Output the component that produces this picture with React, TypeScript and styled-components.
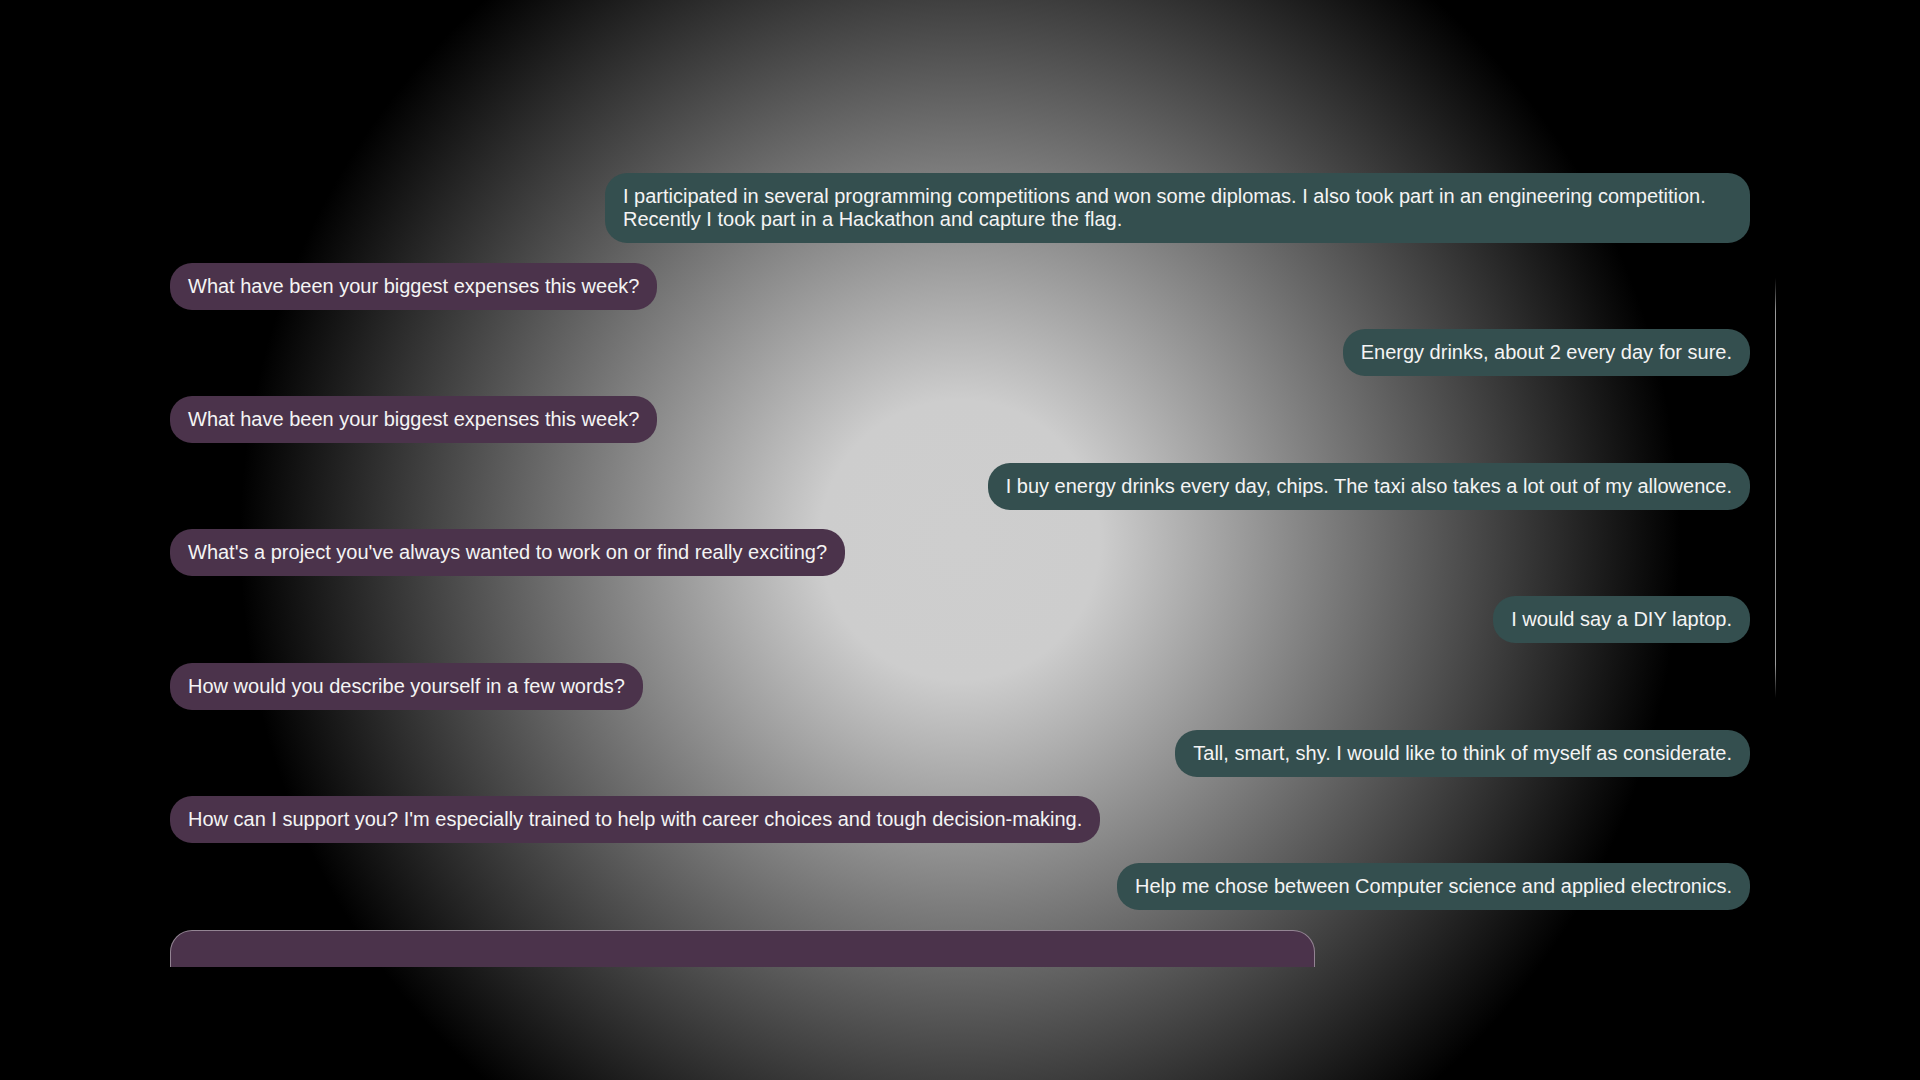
import styled, { createGlobalStyle } from "styled-components";

const GlobalStyle = createGlobalStyle`
    html, body {
        margin: 0;
        padding: 0;
        height: 100%;
        background: #000;
    }
    body {
        font-family: "Liberation Sans", Arial, sans-serif;
    }
    #root {
        height: 100%;
    }
`;

const Page = styled.div`
    width: 100vw;
    height: 100vh;
    overflow: hidden;
    background: radial-gradient(circle at 50% 50%, #cecece 0px, #cdcdcd 140px, #000 720px);
    display: flex;
    justify-content: center;
    align-items: flex-start;
`;

const ChatFrame = styled.div`
    display: flex;
    margin-top: 173px;
    margin-left: 26px;
    height: 794px;
`;

const MessageList = styled.div`
    width: 1580px;
    display: flex;
    flex-direction: column;
    gap: 19.7px;
    overflow: hidden;
`;

const Row = styled.div<{ $mine?: boolean }>`
    display: flex;
    justify-content: ${({ $mine }) => ($mine ? "flex-end" : "flex-start")};
`;

const Bubble = styled.div<{ $mine?: boolean }>`
    box-sizing: border-box;
    max-width: 1145px;
    padding: 12px 18px;
    border-radius: 22px;
    background: ${({ $mine }) => ($mine ? "#344f4f" : "#4b334b")};
    color: #f4f4f4;
    font-size: 20px;
    line-height: 23px;
`;

const Composer = styled.div`
    flex-shrink: 0;
    width: 1145px;
    height: 60px;
    box-sizing: border-box;
    background: #4b334b;
    border: 1px solid rgba(255, 255, 255, 0.4);
    border-radius: 22px;
`;

const ScrollTrack = styled.div`
    width: 1px;
    margin-left: 25px;
`;

const ScrollThumb = styled.div`
    width: 1px;
    height: 420px;
    margin-top: 105px;
    background: linear-gradient(to bottom, transparent, #9a9a9a 8%, #9a9a9a 92%, transparent);
`;

type Msg = { mine: boolean; text: string };

const messages: Msg[] = [
    { mine: true, text: "I participated in several programming competitions and won some diplomas. I also took part in an engineering competition. Recently I took part in a Hackathon and capture the flag." },
    { mine: false, text: "What have been your biggest expenses this week?" },
    { mine: true, text: "Energy drinks, about 2 every day for sure." },
    { mine: false, text: "What have been your biggest expenses this week?" },
    { mine: true, text: "I buy energy drinks every day, chips. The taxi also takes a lot out of my allowence." },
    { mine: false, text: "What's a project you've always wanted to work on or find really exciting?" },
    { mine: true, text: "I would say a DIY laptop." },
    { mine: false, text: "How would you describe yourself in a few words?" },
    { mine: true, text: "Tall, smart, shy. I would like to think of myself as considerate." },
    { mine: false, text: "How can I support you? I'm especially trained to help with career choices and tough decision-making." },
    { mine: true, text: "Help me chose between Computer science and applied electronics." },
];

export default function App() {
    return (
        <>
            <GlobalStyle />
            <Page>
                <ChatFrame>
                    <MessageList>
                        {messages.map((m, i) => (
                            <Row key={i} $mine={m.mine}>
                                <Bubble $mine={m.mine}>{m.text}</Bubble>
                            </Row>
                        ))}
                        <Composer />
                    </MessageList>
                    <ScrollTrack>
                        <ScrollThumb />
                    </ScrollTrack>
                </ChatFrame>
            </Page>
        </>
    );
}
